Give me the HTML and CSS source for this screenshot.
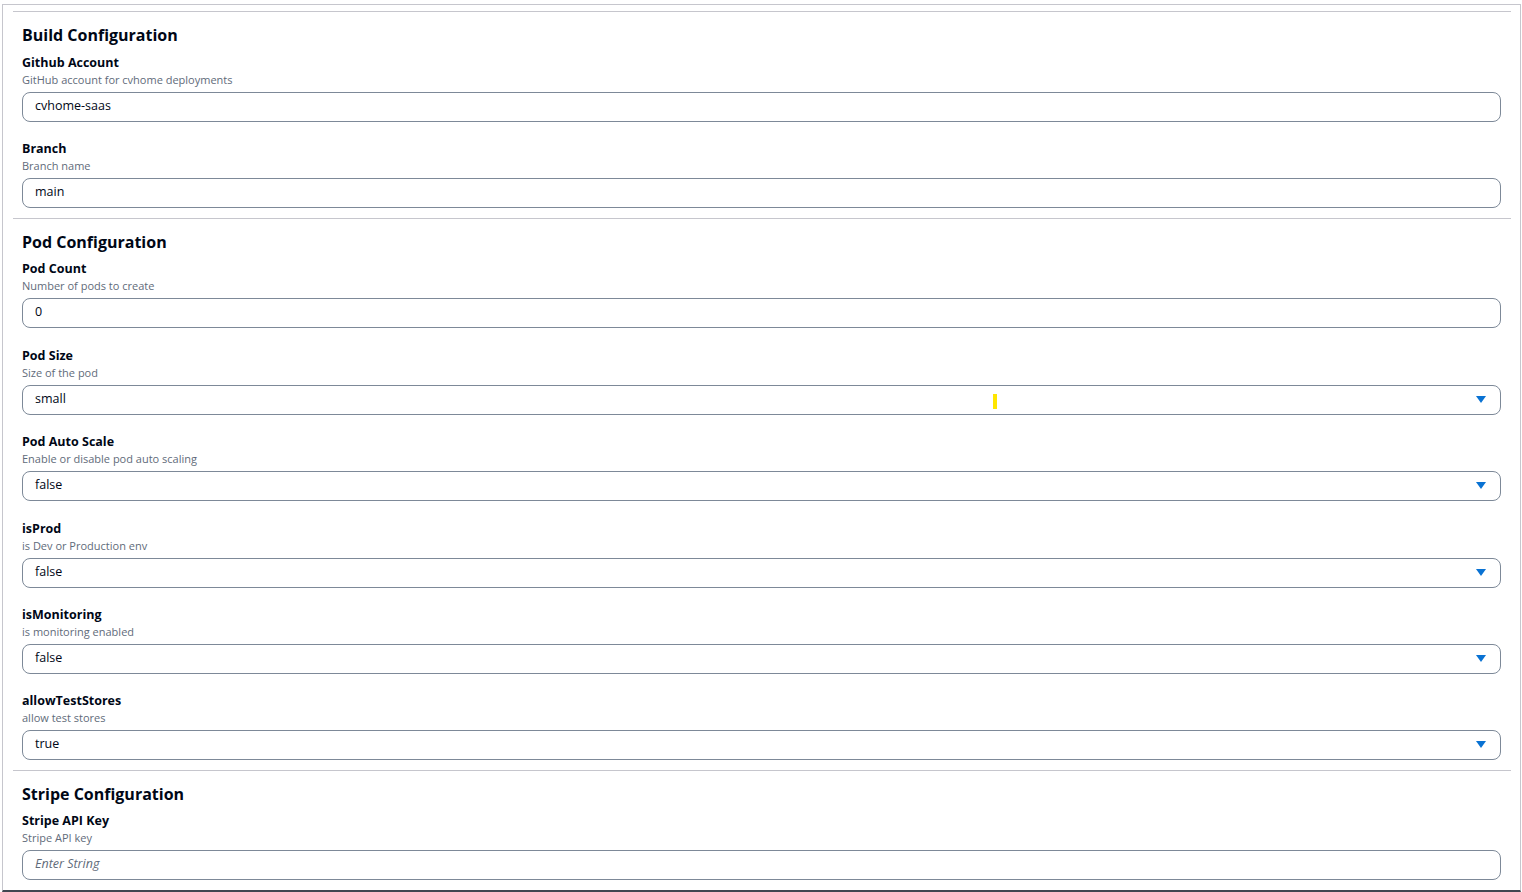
FILE: index.html
```html
<!DOCTYPE html>
<html lang="en">
<head>
    <meta charset="UTF-8">
    <title>Configuration</title>
    <link rel="stylesheet" href="styles.css">
</head>
<body>
    <div class="panel">
        <section class="config-section">
            <h2>Build Configuration</h2>
            <div class="field">
                <label>Github Account</label>
                <div class="desc">GitHub account for cvhome deployments</div>
                <div class="input">cvhome-saas</div>
            </div>
            <div class="field">
                <label>Branch</label>
                <div class="desc">Branch name</div>
                <div class="input">main</div>
            </div>
        </section>

        <section class="config-section">
            <h2>Pod Configuration</h2>
            <div class="field">
                <label>Pod Count</label>
                <div class="desc">Number of pods to create</div>
                <div class="input">0</div>
            </div>
            <div class="field">
                <label>Pod Size</label>
                <div class="desc">Size of the pod</div>
                <div class="input select">small<span class="marker"></span>
                    <svg class="caret" width="10" height="7" viewBox="0 0 10 7"><path d="M0 0H10L5 7Z" fill="#0972d3"/></svg>
                </div>
            </div>
            <div class="field">
                <label>Pod Auto Scale</label>
                <div class="desc">Enable or disable pod auto scaling</div>
                <div class="input select">false
                    <svg class="caret" width="10" height="7" viewBox="0 0 10 7"><path d="M0 0H10L5 7Z" fill="#0972d3"/></svg>
                </div>
            </div>
            <div class="field">
                <label>isProd</label>
                <div class="desc">is Dev or Production env</div>
                <div class="input select">false
                    <svg class="caret" width="10" height="7" viewBox="0 0 10 7"><path d="M0 0H10L5 7Z" fill="#0972d3"/></svg>
                </div>
            </div>
            <div class="field">
                <label>isMonitoring</label>
                <div class="desc">is monitoring enabled</div>
                <div class="input select">false
                    <svg class="caret" width="10" height="7" viewBox="0 0 10 7"><path d="M0 0H10L5 7Z" fill="#0972d3"/></svg>
                </div>
            </div>
            <div class="field">
                <label>allowTestStores</label>
                <div class="desc">allow test stores</div>
                <div class="input select">true
                    <svg class="caret" width="10" height="7" viewBox="0 0 10 7"><path d="M0 0H10L5 7Z" fill="#0972d3"/></svg>
                </div>
            </div>
        </section>

        <section class="config-section">
            <h2>Stripe Configuration</h2>
            <div class="field">
                <label>Stripe API Key</label>
                <div class="desc">Stripe API key</div>
                <div class="input placeholder">Enter String</div>
            </div>
        </section>
    </div>
</body>
</html>
```

FILE: styles.css
```css
body {
    margin: 0;
    height: 892px;
    overflow: hidden;
    background-color: #fff;
    font-family: "Open Sans", Arial, sans-serif;
    color: #000716;
}
.panel {
    box-sizing: border-box;
    margin: 4px 1px 0 2px;
    height: 888px;
    border-top: 1px solid #c6c6cd;
    border-left: 1px solid #c6c6cd;
    border-right: 1px solid #c6c6cd;
    border-bottom: 2px solid #414750;
    padding-top: 6px;
}
.config-section {
    margin: 0 9px 0 10px;
    border-top: 1px solid #c6c6cd;
    padding: 12px 10px 10px 9px;
}
.config-section:first-child {
    padding-top: 12px;
}
.config-section h2 {
    margin: 0 0 7px 0;
    font-size: 16px;
    line-height: 22px;
    font-weight: 700;
}
.config-section:first-child h2 {
    margin-bottom: 8px;
}
.field + .field {
    margin-top: 18.4px;
}
.field label {
    display: block;
    font-size: 12.5px;
    line-height: 18px;
    font-weight: 700;
}
.field .desc {
    font-size: 11px;
    line-height: 16px;
    color: #5f6b7a;
    margin-bottom: 4px;
}
.input {
    position: relative;
    box-sizing: border-box;
    height: 30px;
    border: 1px solid #7d8998;
    border-radius: 8px;
    padding: 0 12px 3px 12px;
    font-size: 12.5px;
    display: flex;
    align-items: center;
}
.input.placeholder {
    color: #5f6b7a;
    font-style: italic;
}
.input .caret {
    position: absolute;
    right: 14px;
    top: 10px;
}
.marker {
    position: absolute;
    left: 970px;
    top: 8px;
    width: 4px;
    height: 15px;
    background-color: #ffe600;
}
```
